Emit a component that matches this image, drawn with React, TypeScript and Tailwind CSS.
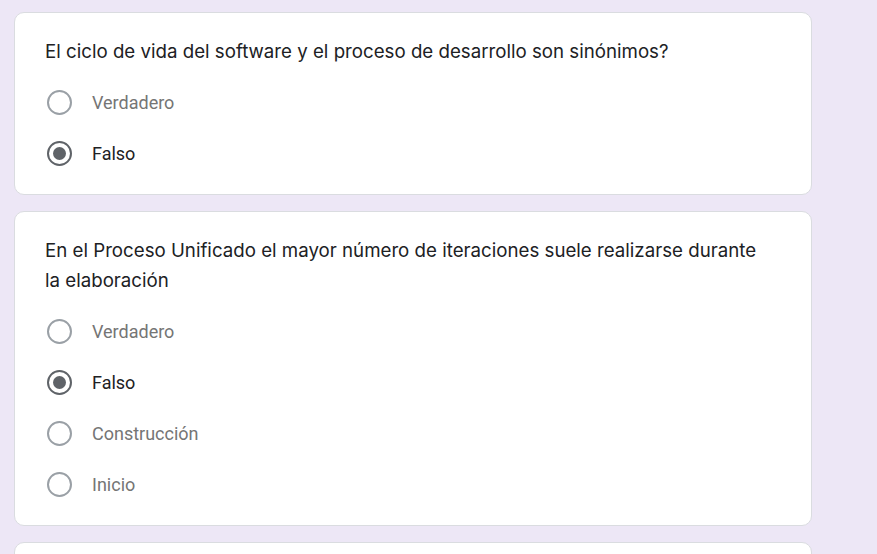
import * as React from "react";

type Question = {
  title: string;
  options: string[];
  selected: number;
};

const questions: Question[] = [
  {
    title:
      "El ciclo de vida del software y el proceso de desarrollo son sinónimos?",
    options: ["Verdadero", "Falso"],
    selected: 1,
  },
  {
    title:
      "En el Proceso Unificado el mayor número de iteraciones suele realizarse durante la elaboración",
    options: ["Verdadero", "Falso", "Construcción", "Inicio"],
    selected: 1,
  },
];

function Radio({ checked }: { checked: boolean }) {
  return (
    <div
      className={
        checked
          ? "flex h-[25px] w-[25px] shrink-0 items-center justify-center rounded-full border-[2.5px] border-[#5f6368]"
          : "flex h-[25px] w-[25px] shrink-0 items-center justify-center rounded-full border-[2.5px] border-[#9aa0a6]"
      }
    >
      {checked && <div className="h-[13px] w-[13px] rounded-full bg-[#5f6368]" />}
    </div>
  );
}

function QuestionCard({ q }: { q: Question }) {
  return (
    <div className="rounded-[10px] border border-[#dadce0] bg-white pl-[30px] pr-[40px] pt-[24px] pb-[15px]">
      <div className="font-['Inter',sans-serif] text-[18.7px] leading-[30px] text-[#202124]">
        {q.title}
      </div>
      <div className="mt-[10px] flex flex-col">
        {q.options.map((opt, i) => (
          <div key={opt} className="flex h-[51px] items-center gap-[20px] pl-[2px]">
            <Radio checked={i === q.selected} />
            <span
              className={
                i === q.selected
                  ? "font-['Roboto',sans-serif] text-[18px] text-[#202124]"
                  : "font-['Roboto',sans-serif] text-[18px] text-[#757575]"
              }
            >
              {opt}
            </span>
          </div>
        ))}
      </div>
    </div>
  );
}

export default function App() {
  return (
    <div className="h-[554px] w-[877px] overflow-hidden bg-[#ede7f6] pl-[14px] pt-[12px]">
      <div className="flex w-[798px] flex-col gap-[16px]">
        {questions.map((q) => (
          <QuestionCard key={q.title} q={q} />
        ))}
        <div className="h-[60px] rounded-[10px] border border-[#dadce0] bg-white" />
      </div>
    </div>
  );
}
